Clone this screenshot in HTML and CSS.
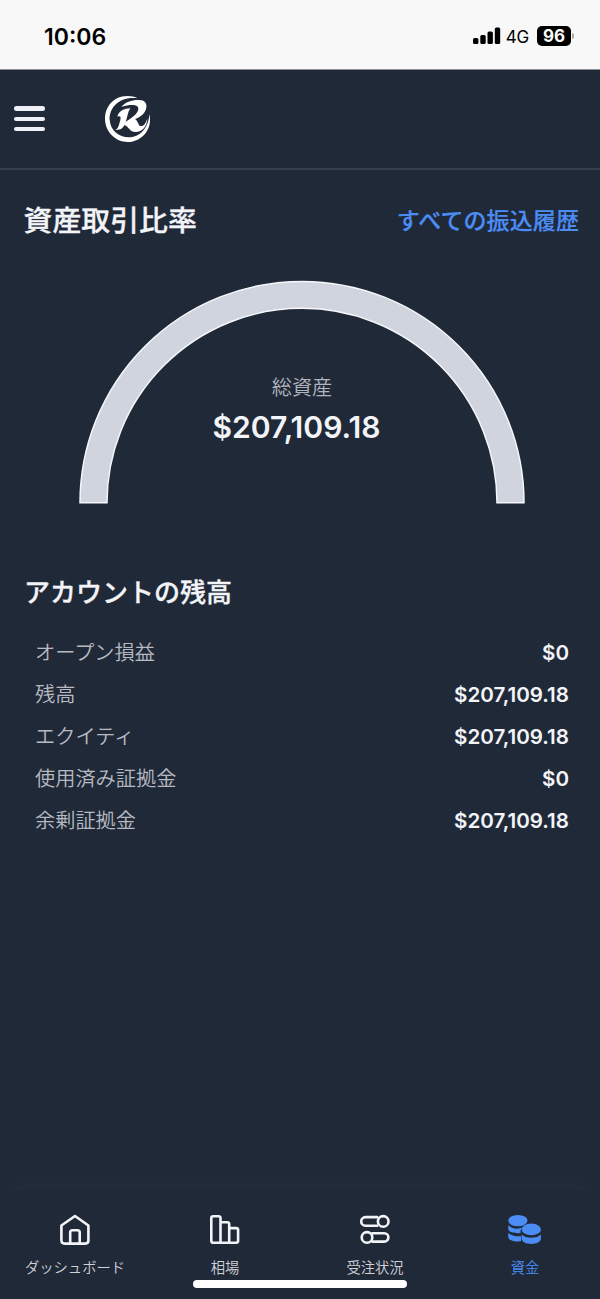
FILE: index.html
```html
<!DOCTYPE html>
<html lang="ja">
<head>
<meta charset="utf-8">
<title>資金</title>
<link rel="stylesheet" href="styles.css">
</head>
<body>
<div class="app">
  <div class="status">
    <span class="clock">10:06</span>
    <div class="status-right">
      <svg class="signal" width="28" height="18" viewBox="0 0 28 18"><rect x="0" y="11" width="5.4" height="6" rx="1.5"/><rect x="7.3" y="8" width="5.4" height="9" rx="1.5"/><rect x="14.5" y="4.4" width="5.4" height="12.6" rx="1.5"/><rect x="21.8" y="0.5" width="5.4" height="16.5" rx="1.5"/></svg>
      <span class="network">4G</span>
      <span class="battery">96</span>
      <span class="battery-tip"></span>
    </div>
  </div>
  <header class="header">
    <button class="menu" aria-label="メニュー"><span></span><span></span><span></span></button>
    <svg class="logo" width="51" height="51" viewBox="306 279 153 153">
      <path d="M413 295C396 286 370 286 351 295C328 307 314 331 315 358C316 396 346 426 383 426C420 426 449 396 450 362C450 355 450 350 448 343C446 378 427 406 397 411C361 416 332 395 329 360C327 322 359 288 413 295Z"/>
      <path d="M364 321C376 306 394 300 414 300C434 299 441 309 439 323C436 339 422 351 405 357C416 363 414 381 425 378C434 376 438 367 442 356C441 378 427 396 407 396C388 396 387 380 373 375L377 365C392 356 412 344 415 328C416 313 394 312 364 321Z"/>
      <path d="M352 350C357 332 372 326 391 325C383 336 382 352 376 370C370 386 360 391 346 390C357 384 357 373 361 360C363 352 362 347 352 350Z"/>
    </svg>
  </header>
  <main class="content">
    <div class="title-row">
      <h1>資産取引比率</h1>
      <a class="history">すべての振込履歴</a>
    </div>
    <section class="gauge">
      <svg class="arc" width="446" height="224" viewBox="0 0 446 224"><path d="M1 221.8A222 221.5 0 0 1 445 221.8H418A195 194.5 0 0 0 28 221.8Z"/></svg>
      <div class="total">
        <span class="total-label">総資産</span>
        <strong>$207,109.18</strong>
      </div>
    </section>
    <h2>アカウントの残高</h2>
    <dl class="balances">
      <div><dt>オープン損益</dt><dd>$0</dd></div>
      <div><dt>残高</dt><dd>$207,109.18</dd></div>
      <div><dt>エクイティ</dt><dd>$207,109.18</dd></div>
      <div><dt>使用済み証拠金</dt><dd>$0</dd></div>
      <div><dt>余剰証拠金</dt><dd>$207,109.18</dd></div>
    </dl>
  </main>
  <nav class="tabs">
    <a class="tab">
      <svg width="36" height="36" viewBox="0 0 36 36"><path d="M4.4 13.5L18 4L31.4 13.5V28.5Q31.4 31.6 28.3 31.6H7.5Q4.4 31.6 4.4 28.5Z"/><path d="M13.2 31.5V20.5Q13.2 18.3 15.4 18.3H20.5Q22.7 18.3 22.7 20.5V31.5"/></svg>
      <span>ダッシュボード</span>
    </a>
    <a class="tab">
      <svg width="36" height="36" viewBox="0 0 36 36"><path d="M13.5 30.7H6.2Q4.3 30.7 4.3 28.8V6.1Q4.3 4.2 6.2 4.2H11.6Q13.5 4.2 13.5 6.1ZM13.5 10.2H20.2Q22.2 10.2 22.2 12.2V30.7H13.5M22.2 16.1H29.1Q31.1 16.1 31.1 18.1V28.7Q31.1 30.7 29.1 30.7H22.2"/></svg>
      <span>相場</span>
    </a>
    <a class="tab">
      <svg width="36" height="36" viewBox="0 0 36 36"><circle cx="26.2" cy="9.4" r="5.3"/><path d="M21.2 5.1H8.5A4.3 4.3 0 0 0 8.5 13.7H21.2"/><circle cx="10" cy="25.4" r="5.3"/><path d="M14.5 21.2H27.2A4.2 4.2 0 0 1 27.2 29.6H14.5"/></svg>
      <span>受注状況</span>
    </a>
    <a class="tab active">
      <svg width="36" height="36" viewBox="0 0 36 36"><ellipse cx="10.9" cy="8.6" rx="9.6" ry="5.7"/><path d="M1.3 13C4 16.8 11 17.8 15.5 15.6C13.8 17.3 13.4 18.9 13.5 21C7.5 21.8 1.3 20 1.3 17Z"/><path d="M1.3 20.8C4.5 24 9 24.6 14 24.3V29.3C7.5 30 1.3 28.3 1.3 25Z"/><ellipse cx="24.3" cy="17.4" rx="9.6" ry="5.9"/><path d="M14.6 22.3C18 27 30.5 27 33.9 22.3V26.6C33.9 33.8 14.6 33.8 14.6 26.6Z"/></svg>
      <span>資金</span>
    </a>
    <div class="home-indicator"></div>
  </nav>
</div>
</body>
</html>
```
FILE: styles.css
```css
* { box-sizing: border-box; }
body {
  margin: 0;
  background: #202938;
  color: #f3f4f8;
  font-family: Inter, "Noto Sans CJK JP", sans-serif;
}
.app { display: flex; flex-direction: column; height: 1299px; }
.status {
  display: flex;
  justify-content: space-between;
  align-items: center;
  height: 70px;
  padding: 3px 26px 0 44px;
  background: #f8f8f8;
  border-bottom: 1px solid #8d9197;
  color: #000;
}
.clock { padding-top: 1px; font-size: 23px; line-height: 28px; font-weight: 600; }
.status-right { display: flex; align-items: center; }
.signal { fill: #000; }
.network { margin-left: 5px; padding-top: 1px; font-size: 17px; letter-spacing: -0.2px; }
.battery {
  display: grid;
  place-items: center;
  width: 34px;
  height: 20px;
  margin-left: 8px;
  border-radius: 5px;
  background: #000;
  color: #fff;
  font-size: 17px;
  font-weight: 700;
}
.battery-tip { width: 2px; height: 6px; margin-left: 1px; border-radius: 0 3px 3px 0; background: #aaa; }
.header {
  display: flex;
  align-items: center;
  height: 99.5px;
  padding: 0 14px;
  border-bottom: 2px solid #343f4d;
}
.menu {
  display: flex;
  flex-direction: column;
  gap: 6px;
  width: 31px;
  padding: 0;
  border: 0;
  background: none;
}
.menu span { height: 4.3px; border-radius: 3px; background: #f0f1f7; }
.logo { margin-left: 57px; fill: #fff; }
.content { flex: 1; padding: 0 21px 0 24px; }
.title-row { display: flex; align-items: center; justify-content: space-between; height: 100px; padding-top: 2px; }
h1 { margin: 0 0 0 -0.5px; font-size: 28.9px; line-height: 40px; font-weight: 500; -webkit-text-stroke: 0.3px; }
.history { color: #4b8df4; font-size: 23px; line-height: 32px; font-weight: 500; letter-spacing: 0.1px; -webkit-text-stroke: 0.2px; }
.gauge { position: relative; height: 297px; padding: 11px 0 0 55px; }
.arc { display: block; fill: #d0d4de; stroke: #f6f7fa; stroke-width: 1.5; overflow: visible; }
.total {
  position: absolute;
  top: 103px;
  left: -1px;
  right: 0;
  display: flex;
  flex-direction: column;
  align-items: center;
}
.total-label { color: #b0b4bd; font-size: 20.2px; line-height: 30px; font-weight: 350; padding-left: 2px; }
.total strong { margin-top: 6px; padding-right: 9px; font-size: 30.1px; line-height: 36px; font-weight: 600; }
h2 { margin: 8px 0 0; font-size: 26px; line-height: 36px; font-weight: 500; -webkit-text-stroke: 0.3px; }
.balances { margin: 20px 0 0; padding: 0 10px 0 11px; }
.balances div { display: flex; justify-content: space-between; align-items: center; height: 42px; }
dt { color: #b7bac2; font-size: 20.2px; font-weight: 350; }
dd { margin: 0; padding-top: 2px; font-size: 20.6px; font-weight: 600; }
.tabs {
  position: relative;
  display: grid;
  grid-template-columns: repeat(4, 1fr);
  height: 109px;
  padding-top: 22px;
  box-shadow: 0 -6px 30px rgba(255, 255, 255, 0.025);
  background: #202938;
}
.tab { display: flex; flex-direction: column; align-items: center; color: #d0d2d8; font-size: 14.3px; line-height: 22px; font-weight: 350; }
.tab svg { fill: none; stroke: #f3f4f8; stroke-width: 2.6; stroke-linejoin: round; }
.tab span { margin-top: 9px; }
.tab.active { color: #4b8df4; }
.tab.active svg { fill: #4b8df4; stroke: none; }
.home-indicator { position: absolute; left: 193px; top: 90px; width: 214px; height: 8px; border-radius: 4px; background: #fff; }
```
